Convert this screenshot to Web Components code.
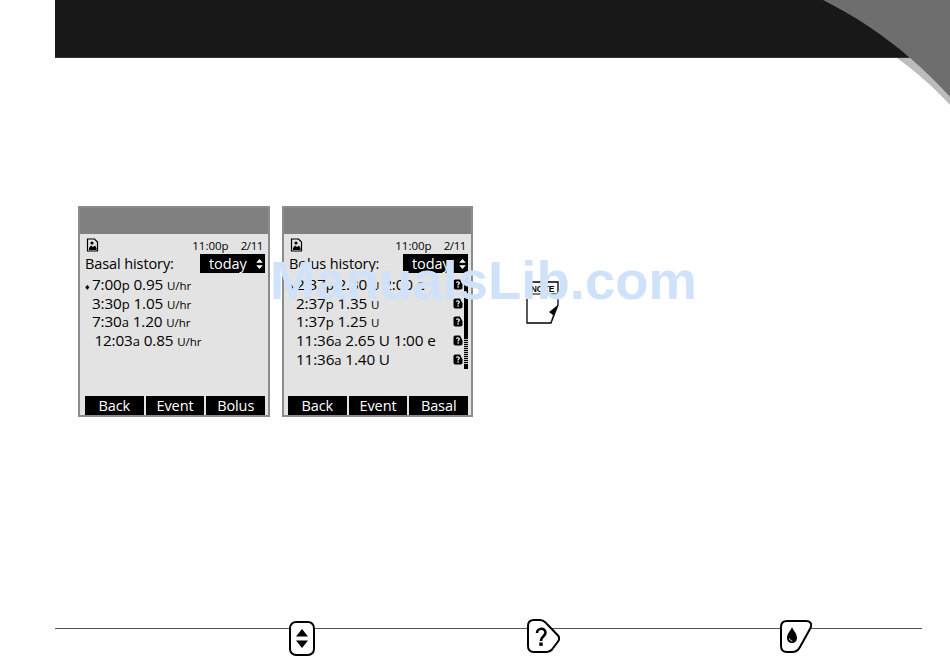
<!DOCTYPE html>
<html>
<head>
<meta charset="utf-8">
<title>History</title>
<style>
  html, body { margin: 0; height: 100%; background: #fff; overflow: hidden; }
  body { position: relative; font-family: "Open Sans", "Liberation Sans", sans-serif; color: #000; }
  .screens { display: flex; padding: 148px 0 0 78px; height: 422px; box-sizing: border-box; }
  .screens pump-screen + pump-screen { margin-left: 12px; width: 191px; --key-left: 4px; }
  history-row small { font-size: 11.5px; letter-spacing: 0; }
  history-row small.t { font-size: 13px; }
  history-row b { font-weight: 500; }
</style>
</head>
<body>
<template id="page-header-template">
  <style>
    :host { display: block; height: 58px; padding-left: 55px; }
    .bar { height: 58px; background: #181818; border-bottom: 1px solid #333; box-sizing: border-box; }
    svg { position: absolute; top: 0; left: 800px; }
  </style>
  <div class="bar"></div>
  <svg width="150" height="110" viewBox="800 0 150 110">
    <path d="M897 58H910C925 71 938 84 950 97V105C935 88 916 72 897 58Z" fill="#bcbcbc"/>
    <path d="M823 0C855 16 885 36 910 58C925 71 938 84 950 97V0Z" fill="#6e6e6e"/>
  </svg>
</template>

<template id="pump-screen-template">
  <style>
    :host { display: flex; flex-direction: column; width: 192px; height: 211px; box-sizing: border-box;
      border: 2px solid #8c8c8c; background: #e3e3e3; color: #000; font-family: "Open Sans", sans-serif; }
    .top { height: 26px; background: #808080; flex: none; }
    .status { display: flex; align-items: center; height: 16px; margin-top: 3px; padding: 0 5px 0 6px; font-size: 11.5px; font-weight: 500; }
    .status svg { display: block; }
    .clock { margin-left: auto; }
    .date { margin-left: 12px; letter-spacing: -.4px; }
    .head { display: flex; align-items: center; height: 19px; margin-top: 1px; padding: 0 3px 0 5px; font-size: 14.5px; letter-spacing: -.1px; }
    .select { display: flex; align-items: center; margin-left: auto; width: 65px; height: 19px; box-sizing: border-box;
      background: #000; color: #fff; padding: 0 2px 0 9px; }
    .select svg { margin-left: auto; }
    .list { flex: 1; display: flex; flex-direction: column; padding-top: 2px; min-height: 0; position: relative; }
    .keys { display: flex; gap: 2px; padding: 0 3px 0 var(--key-left, 5px); height: 19px; flex: none; }
  </style>
  <div class="top"></div>
  <div class="status">
    <svg width="13" height="14" viewBox="0 0 13 14">
      <path d="M1.500 1H8.500L11.500 4V13H1.500Z" fill="#e3e3e3" stroke="#000" stroke-width="1.200"/>
      <path d="M3 12V10L5 7.500L7 9L9 7.500L10.500 10V12Z" fill="#000"/>
      <circle cx="6" cy="5" r="1.600" fill="#000"/>
    </svg>
    <span class="clock"><slot name="clock"></slot></span>
    <span class="date"><slot name="date"></slot></span>
  </div>
  <div class="head">
    <slot name="label"></slot>
    <div class="select">
      <slot name="range"></slot>
      <svg width="7" height="10" viewBox="0 0 8 12"><path d="M4 0L8 4.500H0ZM4 12L0 7.500H8Z" fill="#fff"/></svg>
    </div>
  </div>
  <div class="list"><slot></slot></div>
  <div class="keys"><slot name="keys"></slot></div>
</template>

<template id="history-row-template">
  <style>
    :host { display: flex; align-items: baseline; height: 18.7px; line-height: 18.7px; padding-left: 5px; font-size: 15.3px; letter-spacing: -.15px; white-space: nowrap; position: relative; }
    .mark { width: 7px; flex: none; font-size: 9px; line-height: 1; }
    .info { position: absolute; top: 4px; left: 169px; display: none; }
    :host([info]) .info { display: block; }
  </style>
  <span class="mark" id="mark"></span>
  <slot></slot>
  <svg class="info" width="10" height="11" viewBox="0 0 10 11">
    <path d="M2.500 .5H7L9.500 5.500V8.500C9.500 9.800 8.800 10.500 7.500 10.500H2.500C1.200 10.500 .5 9.800 .5 8.500V2.500C.5 1.200 1.200 .5 2.500 .5Z" fill="#000"/>
    <path d="M3.400 3.800C3.500 2.600 6.300 2.400 6.300 4C6.300 5 5 5 5 6.400" fill="none" stroke="#fff" stroke-width="1.200"/>
    <rect x="4.400" y="7.300" width="1.300" height="1.400" fill="#fff"/>
  </svg>
</template>

<template id="soft-key-template">
  <style>
    :host { display: flex; flex: 1; align-items: center; justify-content: center; background: #000; color: #fff; font-size: 14.5px; letter-spacing: -.1px; }
  </style>
  <slot></slot>
</template>

<template id="scroll-bar-template">
  <style>
    :host { position: absolute; top: 5px; left: 180px; width: 4px; height: 91px; display: flex; flex-direction: column; }
    .solid { height: 60px; background: #000; }
    .dots { flex: 1; background: repeating-linear-gradient(#000 0 1px, #bbb 1px 2px); }
    .end { height: 4px; background: #000; }
  </style>
  <div class="solid"></div><div class="dots"></div><div class="end"></div>
</template>

<template id="note-icon-template">
  <style>
    :host { display: block; width: 33px; height: 43px; margin: 75px 0 0 53px; }
    svg { display: block; }
    text { font: bold 8.500px "Liberation Sans", sans-serif; }
  </style>
  <svg width="33" height="43" viewBox="0 0 33 43">
    <path d="M1 14V42H25L32 24V1H1" fill="none" stroke="#000" stroke-width="1.300"/>
    <path d="M1 13H32" stroke="#000" stroke-width="1"/>
    <text x="16.500" y="10.500" text-anchor="middle">NOTE</text>
    <path d="M24 42L32 24L23 31L27 34Z" fill="#000"/>
  </svg>
</template>

<template id="page-footer-template">
  <style>
    :host { display: flex; margin: 148px 28px 0 55px; border-top: 1px solid #555; height: 30px; padding-left: 234px; }
    ::slotted(key-icon[kind=updown]) { margin-top: -8px; }
    ::slotted(key-icon[kind=help]) { margin: -10px 0 0 212px; }
    ::slotted(key-icon[kind=drop]) { margin: -9px 0 0 220px; }
  </style>
  <slot></slot>
</template>

<template id="key-updown-template">
  <style>:host { display: block; width: 26px; height: 35px; } svg { display: block; }</style>
  <svg width="26" height="35" viewBox="0 0 26 35">
    <rect x="1" y="1" width="24" height="33" rx="6" fill="#fff" stroke="#000" stroke-width="2"/>
    <path d="M13 8L19 15.500H7ZM13 27L7 19.500H19Z" fill="#000"/>
  </svg>
</template>

<template id="key-help-template">
  <style>:host { display: block; width: 33px; height: 34px; } svg { display: block; }</style>
  <svg width="33" height="34" viewBox="0 0 33 34">
    <path d="M7 1H13C15.500 1 17 2 18.500 3.500L30.500 16C32.500 18 32.500 20.500 31 22.500L25 30.500C23.500 32.300 22 33 20 33H7C3 33 1 31 1 27V7C1 3 3 1 7 1Z" fill="#fff" stroke="#000" stroke-width="2"/>
    <path d="M10 14C10 8.500 18.500 8.500 18.500 13.500C18.500 17.500 14 17 14 22" fill="none" stroke="#000" stroke-width="2.600"/>
    <rect x="12.300" y="23.500" width="3.400" height="3.400" fill="#000"/>
  </svg>
</template>

<template id="key-drop-template">
  <style>:host { display: block; width: 32px; height: 33px; } svg { display: block; }</style>
  <svg width="32" height="33" viewBox="0 0 32 33">
    <path d="M7 1H26C30 1 32.500 3.500 30.500 8L20 27C18 31 15.500 32 12 32H7C3 32 1 30 1 26V7C1 3 3 1 7 1Z" fill="#fff" stroke="#000" stroke-width="2"/>
    <path d="M12 7C13.500 11 17 13.500 17 18C17 21 14.700 23 12 23C9.300 23 7 21 7 18C7 13.500 10.500 11 12 7Z" fill="#000"/>
    <path d="M9.500 18.500C9.700 19.800 10.800 20.800 12.300 21" fill="none" stroke="#fff" stroke-width="1"/>
  </svg>
</template>

<template id="lib-watermark-template">
  <style>
    :host { position: absolute; left: 270px; top: 250px; font: bold 54.500px/62px "Liberation Sans", sans-serif; color: #cfe2fa; white-space: nowrap; }
  </style>
  <slot></slot>
</template>

<page-header></page-header>

<div class="screens">
  <pump-screen>
    <span slot="clock">11:00p</span><span slot="date">2/11</span>
    <span slot="label">Basal history:</span><span slot="range">today</span>
    <history-row selected><span>7:00<small class="t">p</small> 0.95 <small>U/hr</small></span></history-row>
    <history-row><span>3:30<small class="t">p</small> 1.05 <small>U/hr</small></span></history-row>
    <history-row><span>7:30<small class="t">a</small> 1.20 <small>U/hr</small></span></history-row>
    <history-row><span>&#8201;12:03<small class="t">a</small> 0.85 <small>U/hr</small></span></history-row>
    <soft-key slot="keys">Back</soft-key><soft-key slot="keys">Event</soft-key><soft-key slot="keys">Bolus</soft-key>
  </pump-screen>
  <pump-screen>
    <span slot="clock">11:00p</span><span slot="date">2/11</span>
    <span slot="label">Bolus history:</span><span slot="range">today</span>
    <history-row selected info><span>2:37<small class="t">p</small> 2.30 <small>U</small> 2:00 e</span></history-row>
    <history-row info><span>2:37<small class="t">p</small> 1.35 <small>U</small></span></history-row>
    <history-row info><span>1:37<small class="t">p</small> 1.25 <small>U</small></span></history-row>
    <history-row info><span>11:36<small class="t">a</small> 2.65 <b>U</b> 1:00 e</span></history-row>
    <history-row info><span>11:36<small class="t">a</small> 1.40 <b>U</b></span></history-row>
    <scroll-bar></scroll-bar>
    <soft-key slot="keys">Back</soft-key><soft-key slot="keys">Event</soft-key><soft-key slot="keys">Basal</soft-key>
  </pump-screen>
  <note-icon></note-icon>
</div>

<page-footer>
  <key-icon kind="updown"></key-icon>
  <key-icon kind="help"></key-icon>
  <key-icon kind="drop"></key-icon>
</page-footer>

<lib-watermark>ManualsLib.com</lib-watermark>

<script>
function stamp(el, id) {
  const root = el.attachShadow({ mode: 'open' });
  root.appendChild(document.getElementById(id).content.cloneNode(true));
  return root;
}

class PageHeader extends HTMLElement {
  constructor() { super(); stamp(this, 'page-header-template'); }
}
class PumpScreen extends HTMLElement {
  constructor() { super(); stamp(this, 'pump-screen-template'); }
}
class HistoryRow extends HTMLElement {
  constructor() { super(); this._root = stamp(this, 'history-row-template'); }
  connectedCallback() {
    if (this.hasAttribute('selected')) this._root.getElementById('mark').textContent = '\u2666';
  }
}
class SoftKey extends HTMLElement {
  constructor() { super(); stamp(this, 'soft-key-template'); }
}
class ScrollBar extends HTMLElement {
  constructor() { super(); stamp(this, 'scroll-bar-template'); }
}
class NoteIcon extends HTMLElement {
  constructor() { super(); stamp(this, 'note-icon-template'); }
}
class PageFooter extends HTMLElement {
  constructor() { super(); stamp(this, 'page-footer-template'); }
}
class KeyIcon extends HTMLElement {
  connectedCallback() {
    if (!this.shadowRoot) stamp(this, 'key-' + this.getAttribute('kind') + '-template');
  }
}
class LibWatermark extends HTMLElement {
  constructor() { super(); stamp(this, 'lib-watermark-template'); }
}

customElements.define('page-header', PageHeader);
customElements.define('pump-screen', PumpScreen);
customElements.define('history-row', HistoryRow);
customElements.define('soft-key', SoftKey);
customElements.define('scroll-bar', ScrollBar);
customElements.define('note-icon', NoteIcon);
customElements.define('page-footer', PageFooter);
customElements.define('key-icon', KeyIcon);
customElements.define('lib-watermark', LibWatermark);
</script>
</body>
</html>
